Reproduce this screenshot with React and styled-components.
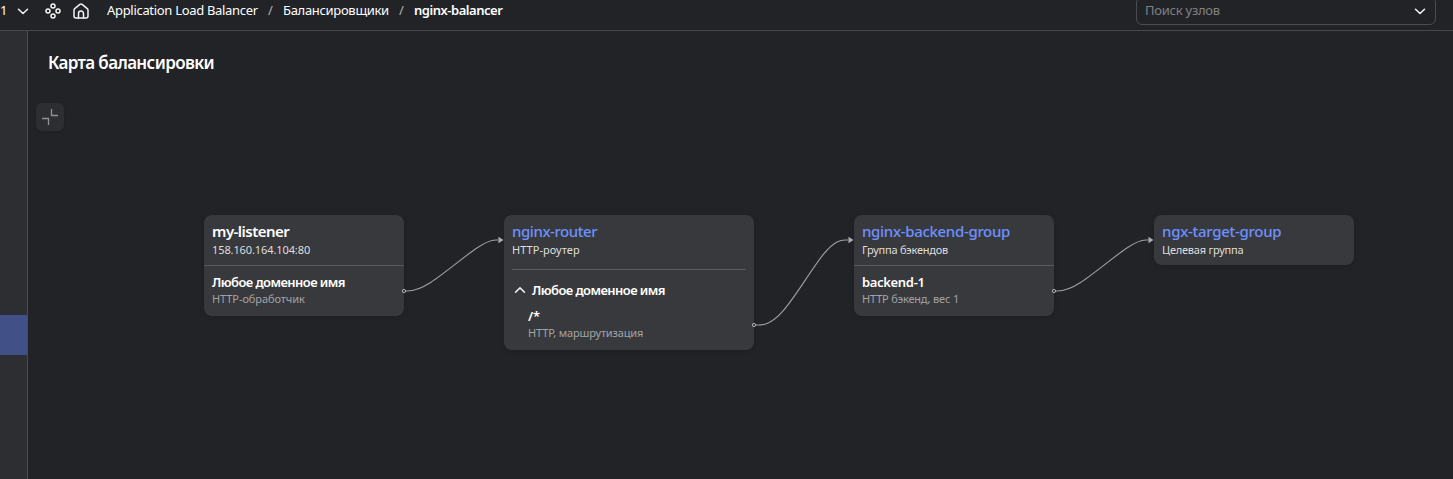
import React from "react";
import styled, { createGlobalStyle } from "styled-components";

const GlobalStyle = createGlobalStyle`
  * { box-sizing: border-box; }
  html, body, #root { height: 100%; }
  body {
    margin: 0;
    overflow: hidden;
    background: #222327;
    color: #fff;
    font-family: "Noto Sans", "Open Sans", sans-serif;
    font-size: 13px;
  }
`;

const Page = styled.div`
  display: flex;
  flex-direction: column;
  width: 100%;
  height: 100%;
`;

const TopBar = styled.header`
  display: flex;
  align-items: flex-start;
  flex: none;
  height: 31px;
  padding-right: 17px;
  border-bottom: 1px solid #47484b;
  overflow: hidden;
`;

const Crumbs = styled.nav`
  display: flex;
  align-items: center;
  flex: 1;
  height: 22px;
  line-height: 22px;
  white-space: nowrap;
`;

const Crumb = styled.span`
  flex: none;
  width: ${(p) => p.$w}px;
  height: 24px;
  color: #fff;
  font-weight: ${(p) => (p.$current ? 600 : 400)};
  letter-spacing: ${(p) => p.$track || 0}px;
`;

const Slash = styled.span`
  flex: none;
  width: 25px;
  height: 24px;
  text-align: center;
  color: #b0b0b3;
`;

const BarIcon = styled.svg`
  flex: none;
  width: 16px;
  height: 16px;
  margin-right: ${(p) => p.$gap}px;
  fill: none;
  stroke: #f4f4f4;
  stroke-width: 1.5;
  stroke-linecap: round;
  stroke-linejoin: round;
`;

const Search = styled.div`
  display: flex;
  flex: none;
  align-items: center;
  justify-content: space-between;
  width: 300px;
  height: 28px;
  margin-top: -3px;
  padding: 0 7px 0 8px;
  border: 1px solid #4b4c4f;
  border-radius: 6px;
  color: #808184;
  line-height: 26px;
`;

const Placeholder = styled.span`
  height: 28px;
  letter-spacing: -0.25px;
`;

const Body = styled.div`
  display: flex;
  flex: 1;
  min-height: 0;
`;

const Rail = styled.aside`
  flex: none;
  width: 28px;
  padding-top: 284px;
  background: #2d2e32;
  border-right: 1px solid #4b4c50;
`;

const RailActive = styled.div`
  height: 40px;
  background: #415188;
  border-radius: 0 1px 1px 0;
`;

const Main = styled.main`
  display: flex;
  flex-direction: column;
  flex: 1;
  min-width: 0;
`;

const Title = styled.h1`
  flex: none;
  margin: 0;
  padding: 20px 20px 0;
  font-size: 17px;
  line-height: 24px;
  font-weight: 600;
  letter-spacing: -0.63px;
`;

const Canvas = styled.section`
  position: relative;
  flex: 1;
  margin-top: 24px;
`;

const CollapseButton = styled.button`
  position: absolute;
  left: 8px;
  top: 4px;
  display: flex;
  width: 28px;
  height: 28px;
  padding: 6px;
  border: 0;
  border-radius: 6px;
  background: #2d2e32;
  box-shadow: 0 1px 3px rgba(0, 0, 0, 0.12);
`;

const Links = styled.svg`
  position: absolute;
  left: 0;
  top: 0;
  width: 100%;
  height: 100%;
  z-index: 1;
  pointer-events: none;
`;

const Node = styled.article`
  position: absolute;
  left: ${(p) => p.$x}px;
  top: 116px;
  width: ${(p) => p.$w || 200}px;
  height: ${(p) => p.$h}px;
  border-radius: 8px;
  background: #38393d;
  box-shadow: 0 1px 5px rgba(0, 0, 0, 0.15);
  white-space: nowrap;
`;

const NodeHead = styled.div`
  height: ${(p) => (p.$inset ? 55 : 51)}px;
  margin: 0 ${(p) => (p.$inset ? 8 : 0)}px;
  padding: 6px ${(p) => (p.$inset ? 0 : 8)}px 0;
  border-bottom: ${(p) => (p.$plain ? "0" : "1px solid #5b5c5f")};
`;

const NodeName = styled.div`
  font-size: 15px;
  line-height: 20px;
  margin-bottom: 1px;
  font-weight: ${(p) => (p.$link ? 500 : 600)};
  color: ${(p) => (p.$link ? "#6e91ff" : "#fff")};
  letter-spacing: ${(p) => p.$track || 0}px;
`;

const Caption = styled.div`
  font-size: 11px;
  line-height: 16px;
  color: ${(p) => (p.$muted ? "#a2a3a5" : "#dedede")};
  letter-spacing: ${(p) => p.$track || 0}px;
`;

const Item = styled.div`
  padding: 7px 8px 0;
`;

const ItemName = styled.div`
  font-size: 13px;
  line-height: 18px;
  font-weight: 600;
  letter-spacing: ${(p) => p.$track || 0}px;
`;

const GroupRow = styled.div`
  display: flex;
  align-items: center;
  gap: 4px;
  padding: 11px 8px 0;
`;

const Route = styled.div`
  padding: 8px 24px 0;
`;

const Chevron = ({ up, gap = 0 }) => (
  <BarIcon $gap={gap} viewBox="0 0 16 16">
    <path d={up ? "M3.5 10.2 8 5.9l4.5 4.3" : "M3.5 6.2 8 10.5l4.5-4.3"} />
  </BarIcon>
);

// Uniform B-spline that leaves and enters its nodes horizontally.
const splinePath = (x1, y1, x2, y2, reach) => {
  const a = [x1, y1];
  const b = [x1 + reach, y1];
  const c = [x2 - reach + 5, y2];
  const d = [x2, y2];
  const mix = (...terms) =>
    [0, 1].map((i) => terms.reduce((sum, [k, p]) => sum + k * p[i], 0).toFixed(2)).join(" ");
  const t = 1 / 3;
  const s = 1 / 6;
  return [
    `M${mix([1, a])}`,
    `L${mix([5 * s, a], [s, b])}`,
    `C${mix([2 * t, a], [t, b])} ${mix([t, a], [2 * t, b])} ${mix([s, a], [4 * s, b], [s, c])}`,
    `C${mix([2 * t, b], [t, c])} ${mix([t, b], [2 * t, c])} ${mix([s, b], [4 * s, c], [s, d])}`,
    `C${mix([2 * t, c], [t, d])} ${mix([t, c], [2 * t, d])} ${mix([s, c], [5 * s, d])}`,
    `L${mix([1, d])}`,
  ].join("");
};

const Link = ({ x1, y1, x2, y2, reach = 20 }) => (
  <g>
    <path d={splinePath(x1, y1, x2 - 5, y2, reach)} fill="none" stroke="#a0a0a2" strokeWidth="1.1" />
    <path d={`M${x2 - 5} ${y2 - 3.2}L${x2} ${y2}L${x2 - 5} ${y2 + 3.2}Z`} fill="#acacae" />
    <circle cx={x1} cy={y1} r="1.6" fill="#2a2b2f" stroke="#b4b4b6" />
  </g>
);

export default function App() {
  return (
    <Page>
      <GlobalStyle />
      <TopBar>
        <Crumbs>
          <Crumb $w={15}>1</Crumb>
          <Chevron gap={14} />
          <BarIcon $gap={12} viewBox="0 0 16 16">
            <circle cx="8" cy="3" r="2" />
            <circle cx="3" cy="8" r="2" />
            <circle cx="13" cy="8" r="2" />
            <circle cx="8" cy="13" r="2" />
          </BarIcon>
          <BarIcon $gap={18} viewBox="0 0 16 16">
            <path d="M1 7.2Q1 6 2 5.3L6.9 1.3Q8 .5 9.1 1.3L14 5.3Q15 6 15 7.2V13Q15 15 13 15H3Q1 15 1 13Z" />
            <path d="M5.5 15v-4.5a2.5 2.5 0 0 1 5 0V15" />
          </BarIcon>
          <Crumb $w={151} $track={-0.31}>Application Load Balancer</Crumb>
          <Slash>/</Slash>
          <Crumb $w={106} $track={-0.31}>Балансировщики</Crumb>
          <Slash>/</Slash>
          <Crumb $w={90} $track={-0.47} $current>nginx-balancer</Crumb>
        </Crumbs>
        <Search>
          <Placeholder>Поиск узлов</Placeholder>
          <Chevron />
        </Search>
      </TopBar>
      <Body>
        <Rail>
          <RailActive />
        </Rail>
        <Main>
          <Title>Карта балансировки</Title>
          <Canvas>
            <CollapseButton aria-label="Свернуть">
              <svg width="16" height="16" viewBox="0 0 16 16" fill="none" stroke="#929396" strokeWidth="1.3">
                <path d="M9.5 0v6.5H16M0 9.5h6.5V16" />
              </svg>
            </CollapseButton>
            <Node $x={176} $h={101}>
              <NodeHead>
                <NodeName $track={-0.52}>my-listener</NodeName>
                <Caption $track={-0.1}>158.160.164.104:80</Caption>
              </NodeHead>
              <Item>
                <ItemName $track={-0.57}>Любое доменное имя</ItemName>
                <Caption $muted $track={-0.08}>HTTP-обработчик</Caption>
              </Item>
            </Node>
            <Node $x={476} $w={250} $h={135}>
              <NodeHead $inset>
                <NodeName $link $track={-0.44}>nginx-router</NodeName>
                <Caption $track={0.06}>HTTP-роутер</Caption>
              </NodeHead>
              <GroupRow>
                <Chevron up />
                <ItemName $track={-0.57}>Любое доменное имя</ItemName>
              </GroupRow>
              <Route>
                <ItemName $track={-0.3}>/*</ItemName>
                <Caption $muted $track={-0.15}>HTTP, маршрутизация</Caption>
              </Route>
            </Node>
            <Node $x={826} $h={101}>
              <NodeHead>
                <NodeName $link $track={-0.32}>nginx-backend-group</NodeName>
                <Caption $track={-0.22}>Группа бэкендов</Caption>
              </NodeHead>
              <Item>
                <ItemName $track={-0.33}>backend-1</ItemName>
                <Caption $muted $track={-0.17}>HTTP бэкенд, вес 1</Caption>
              </Item>
            </Node>
            <Node $x={1126} $h={50}>
              <NodeHead $plain>
                <NodeName $link $track={-0.28}>ngx-target-group</NodeName>
                <Caption $track={-0.22}>Целевая группа</Caption>
              </NodeHead>
            </Node>
            <Links>
              <Link x1={376} y1={192} x2={475.5} y2={141} />
              <Link x1={726} y1={226} x2={825.5} y2={141} reach={25} />
              <Link x1={1026} y1={192} x2={1125.5} y2={141} />
            </Links>
          </Canvas>
        </Main>
      </Body>
    </Page>
  );
}
